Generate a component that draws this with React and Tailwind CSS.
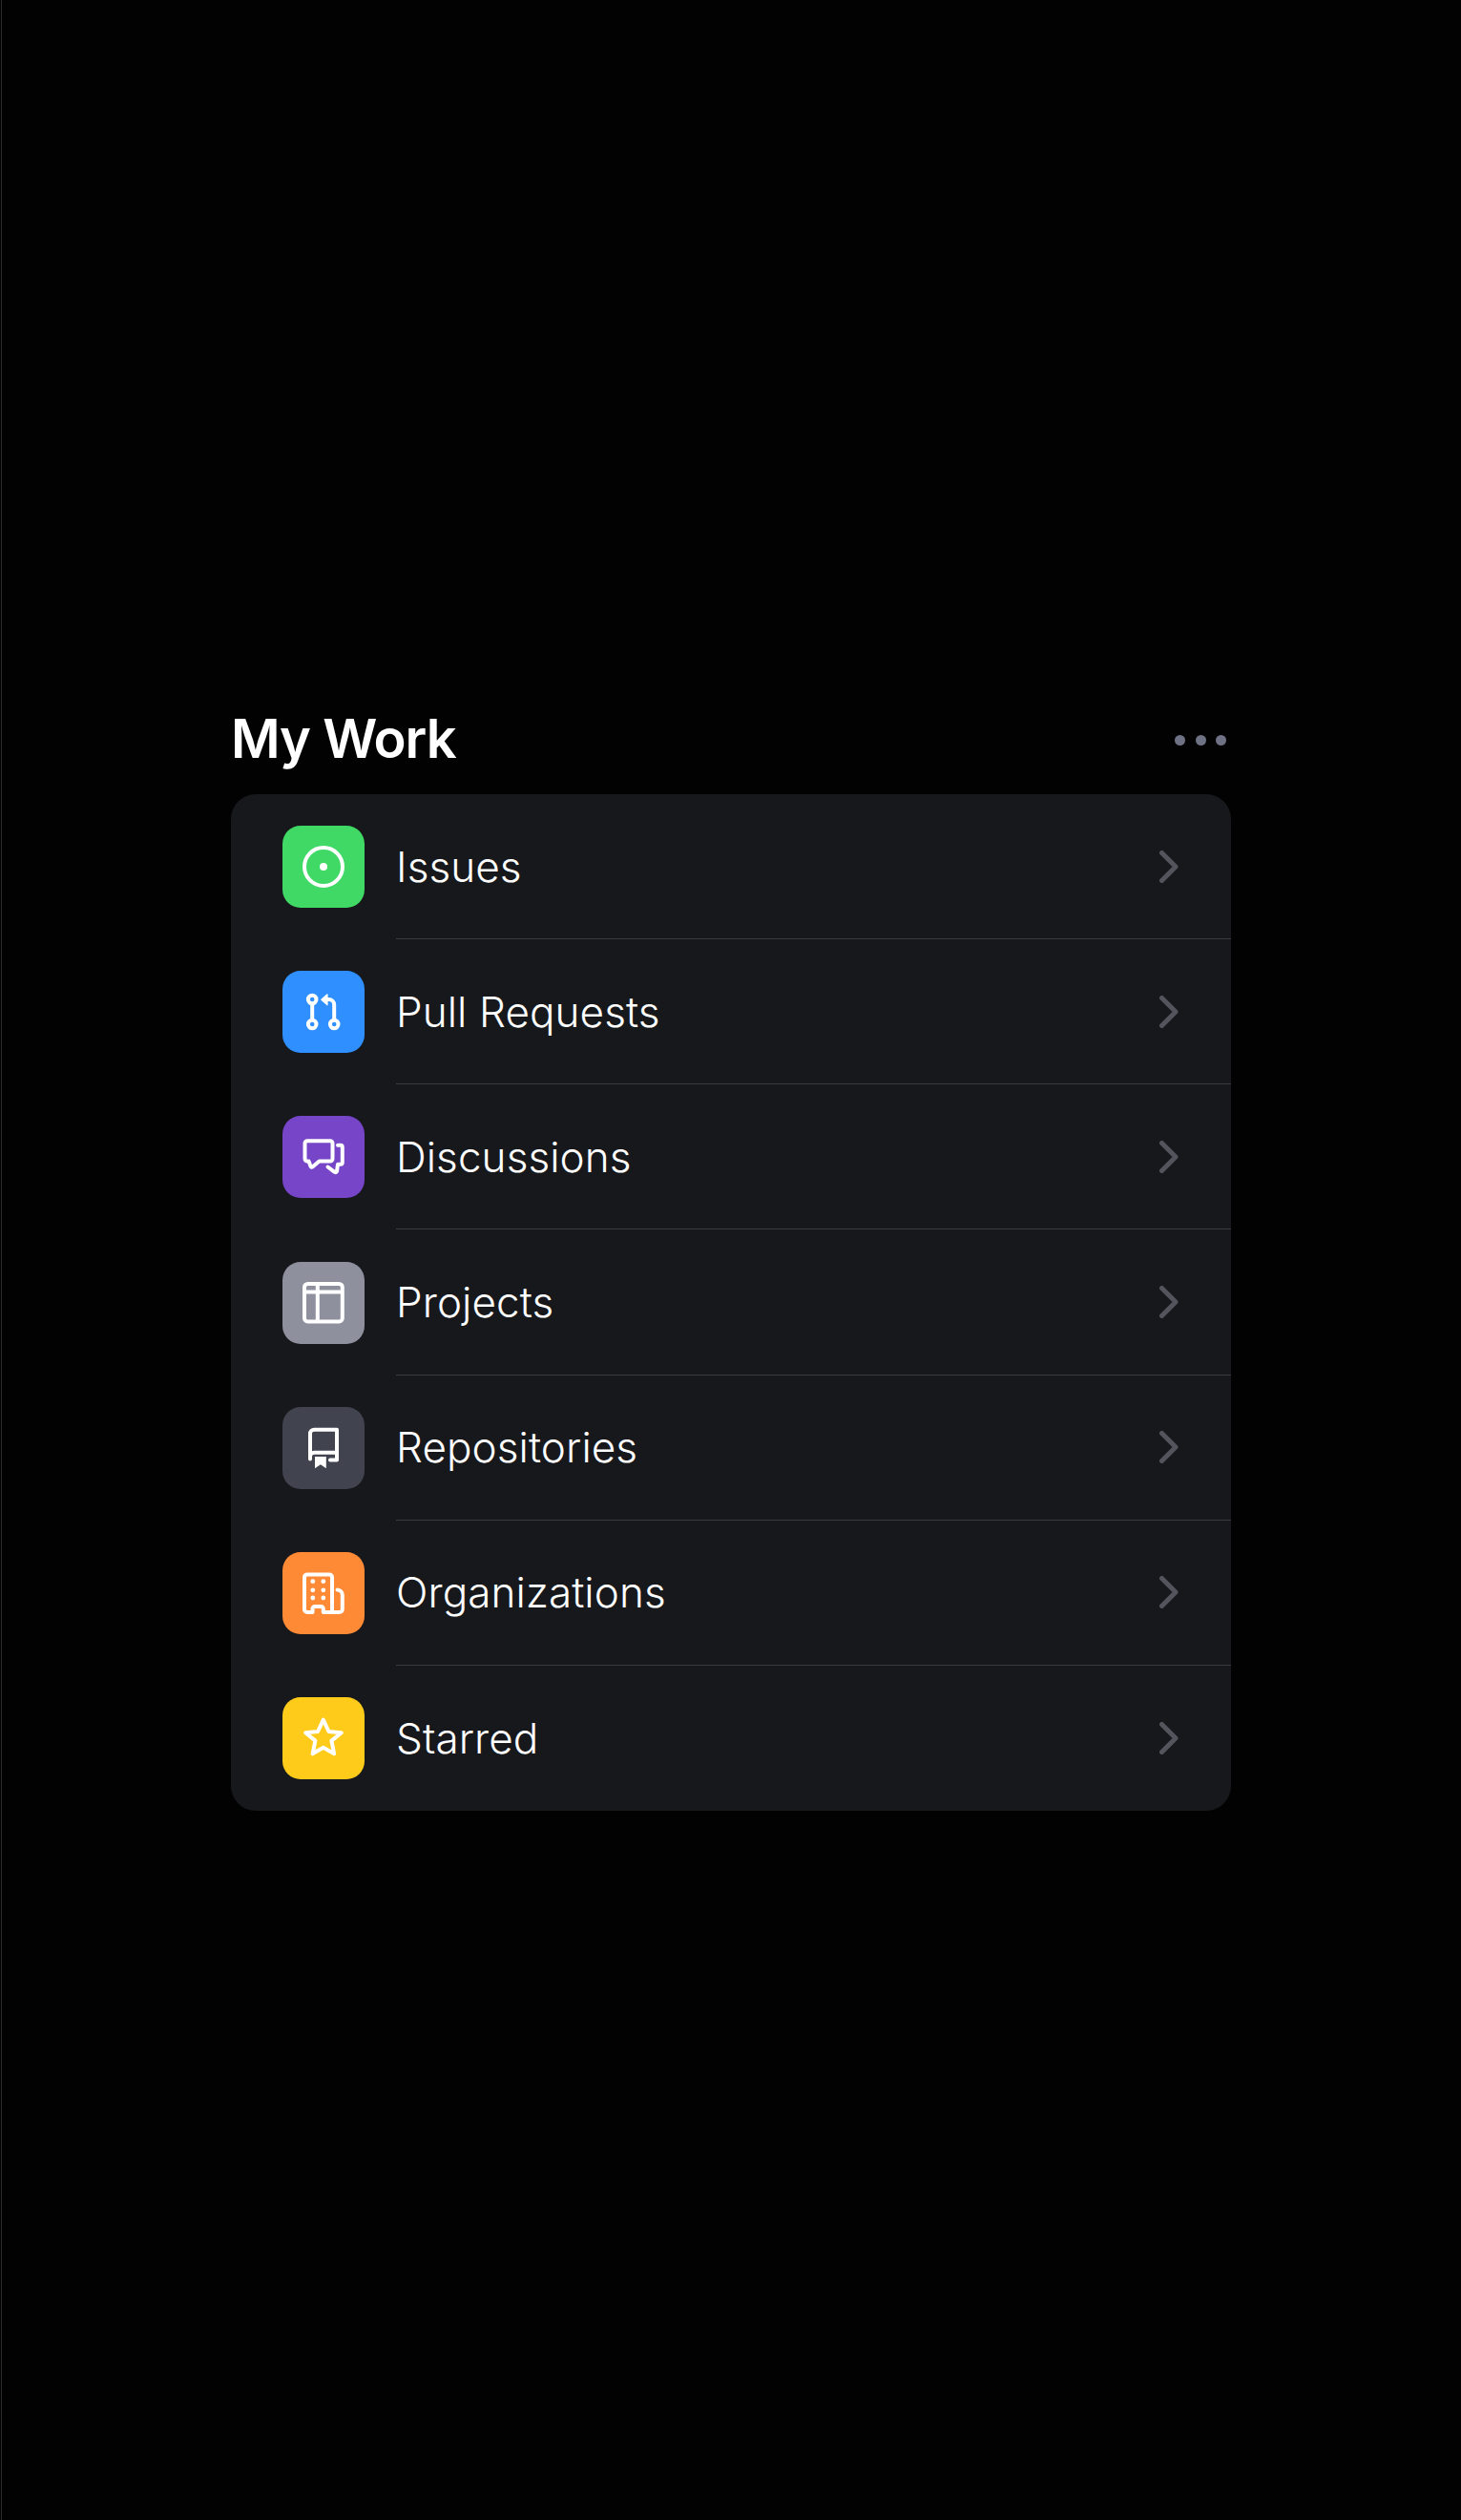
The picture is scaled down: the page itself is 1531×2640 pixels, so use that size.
const rows = [
  {
    label: "Issues",
    bg: "bg-[#40d966]",
    icon: (
      <>
        <circle cx="43" cy="43" r="20" fill="none" stroke="white" strokeWidth="4" />
        <circle cx="43" cy="43" r="4" fill="white" />
      </>
    ),
  },
  {
    label: "Pull Requests",
    bg: "bg-[#2f8fff]",
    icon: (
      <g fill="none" stroke="white" strokeWidth="4">
        <circle cx="31.2" cy="30" r="4.3" />
        <circle cx="31.2" cy="56" r="4.3" />
        <circle cx="54.2" cy="56" r="4.3" />
        <path d="M31.2 34.3V51.7" />
        <path d="M46 30H48.5A5.7 5.7 0 0 1 54.2 35.7V51.7" />
        <path d="M47 24.8V35.8L40.8 30.3Z" fill="white" strokeWidth="1.2" strokeLinejoin="round" />
      </g>
    ),
  },
  {
    label: "Discussions",
    bg: "bg-[#7645c8]",
    icon: (
      <g fill="none" stroke="white" strokeWidth="4" strokeLinecap="round" strokeLinejoin="round">
        <path d="M26 26.3H50A2.5 2.5 0 0 1 52.5 28.8V45A2.5 2.5 0 0 1 50 47.5H38.5L31.5 53.5A1.2 1.2 0 0 1 29.6 53L27.5 47.5H26A2.5 2.5 0 0 1 23.5 45V28.8A2.5 2.5 0 0 1 26 26.3Z" />
        <path d="M58 30.7H60.8A2 2 0 0 1 62.8 32.7V48.7A2 2 0 0 1 60.8 50.7H58L57 58A1.5 1.5 0 0 1 54.6 58.8L47.5 53.5" />
      </g>
    ),
  },
  {
    label: "Projects",
    bg: "bg-[#8e909e]",
    icon: (
      <g fill="none" stroke="white" strokeWidth="4">
        <rect x="23" y="23" width="39.8" height="39.4" rx="3.5" />
        <path d="M23 31.5H62.8M36.8 23V62.4" />
      </g>
    ),
  },
  {
    label: "Repositories",
    bg: "bg-[#41434f]",
    icon: (
      <g>
        <path
          d="M29 54.5V28A4.3 4.3 0 0 1 33.3 23.7H57V55.5H50M29 52A4.3 4.3 0 0 1 33.3 47.7H57"
          fill="none"
          stroke="white"
          strokeWidth="4"
          strokeLinecap="round"
          strokeLinejoin="round"
        />
        <path d="M34 52H45.8V64.3L39.9 60.2L34 64.3Z" fill="white" />
      </g>
    ),
  },
  {
    label: "Organizations",
    bg: "bg-[#ff8a36]",
    icon: (
      <g>
        <path
          d="M31.5 63H26A3 3 0 0 1 23 60V26.4A3 3 0 0 1 26 23.4H49A3 3 0 0 1 52 26.4V63H42.8V59.5A2.5 2.5 0 0 0 40.3 57H34A2.5 2.5 0 0 0 31.5 59.5ZM57.5 39.5A5.5 5.5 0 0 1 62.8 45V60A3 3 0 0 1 59.8 63H52"
          fill="none"
          stroke="white"
          strokeWidth="4"
          strokeLinecap="round"
          strokeLinejoin="round"
        />
        {[31.8, 42.8].map((x) =>
          [30.7, 39.8, 48].map((y) => <circle key={`${x}-${y}`} cx={x} cy={y} r="2.4" fill="white" />)
        )}
      </g>
    ),
  },
  {
    label: "Starred",
    bg: "bg-[#ffcb1b]",
    icon: (
      <path
        d="M42.8 23.7L48.5 36L61.8 37.3L51.4 45.6L54.2 59.3L42.8 52.7L31.6 59.3L34.4 45.6L24.2 37.3L37.1 36Z"
        fill="none"
        stroke="white"
        strokeWidth="4"
        strokeLinejoin="round"
      />
    ),
  },
];

const Row = ({ item, last }) => {
  return (
    <div className="flex items-center h-[152.17px] pl-[54px]">
      <div className={`w-[86px] h-[86px] rounded-[19px] shrink-0 ${item.bg}`}>
        <svg width="86" height="86" viewBox="0 0 86 86">{item.icon}</svg>
      </div>
      <div className={`ml-[33px] flex-1 h-full flex items-center justify-between pr-[55px] ${last ? "" : "border-b border-[#3a3b41]"}`}>
        <span className="text-[44px] font-[350] tracking-[0.1px] text-white">{item.label}</span>
        <svg width="20" height="34" viewBox="0 0 20 34" fill="none">
          <path d="M2.5 2.5L17 17L2.5 31.5" stroke="#53545c" strokeWidth="5" strokeLinecap="round" strokeLinejoin="round" />
        </svg>
      </div>
    </div>
  );
};

export default function App() {
  return (
    <div className="flex min-h-[2640px] bg-[#020202] font-['Inter',sans-serif]">
      <div className="w-[1px] ml-[1px] bg-[#2a2a2a]" />
      <div className="w-[1048px] ml-[240px] pt-[734px]">
        <div className="flex items-center justify-between h-[80px] mb-[18px]">
          <h1 className="text-[56px] font-semibold text-white leading-none tracking-[-1px]">My Work</h1>
          <div className="flex gap-[10.5px] pr-[5px] mt-[2px]">
            <div className="w-[11px] h-[11px] rounded-full bg-[#6f7285]" />
            <div className="w-[11px] h-[11px] rounded-full bg-[#6f7285]" />
            <div className="w-[11px] h-[11px] rounded-full bg-[#6f7285]" />
          </div>
        </div>
        <div className="rounded-[26px] bg-[#17181c] overflow-hidden">
          {rows.map((item, i) => (
            <Row key={item.label} item={item} last={i === rows.length - 1} />
          ))}
        </div>
      </div>
    </div>
  );
}
